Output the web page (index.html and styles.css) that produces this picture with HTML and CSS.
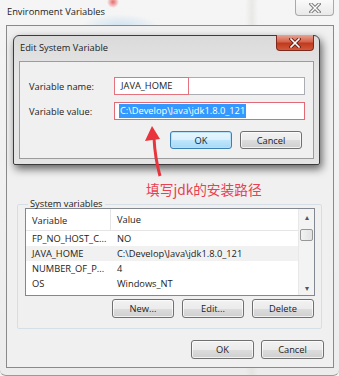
FILE: index.html
```html
<!DOCTYPE html>
<html lang="en">
<head>
    <meta charset="UTF-8">
    <meta name="viewport" content="width=device-width, initial-scale=1.0">
    <title>Environment Variables</title>
    <link rel="stylesheet" href="styles.css">
</head>
<body>
<div class="win">
    <div class="win-title">
        <span class="win-caption">Environment Variables</span>
        <span class="cap-btn">
            <svg width="12" height="10" viewBox="0 0 12 10">
                <path d="M2 1 L10 9 M10 1 L2 9" stroke="#7b7b7b" stroke-width="3.4" stroke-linecap="square"/>
                <path d="M2 1 L10 9 M10 1 L2 9" stroke="#fdfdfd" stroke-width="1.4" stroke-linecap="square"/>
            </svg>
        </span>
    </div>

    <div class="win-body">
        <fieldset class="group">
            <legend>System variables</legend>
            <div class="list">
                <div class="list-main">
                    <div class="list-head"><span>Variable</span><span>Value</span></div>
                    <div class="row"><span>FP_NO_HOST_C...</span><span>NO</span></div>
                    <div class="row row-sel"><span>JAVA_HOME</span><span>C:\Develop\Java\jdk1.8.0_121</span></div>
                    <div class="row"><span>NUMBER_OF_P...</span><span>4</span></div>
                    <div class="row"><span>OS</span><span>Windows_NT</span></div>
                </div>
                <div class="scroll">
                    <span class="scroll-arrow">&#9652;</span>
                    <span class="scroll-thumb"></span>
                    <span class="scroll-track"></span>
                    <span class="scroll-arrow">&#9662;</span>
                </div>
            </div>
            <div class="btn-row">
                <button class="btn">New...</button>
                <button class="btn">Edit...</button>
                <button class="btn">Delete</button>
            </div>
        </fieldset>

        <div class="win-footer">
            <button class="btn btn-wide">OK</button>
            <button class="btn btn-wide">Cancel</button>
        </div>
    </div>
</div>

<!-- the edit dialog sits over the main window -->
<div class="dlg">
    <div class="dlg-title">
        <span>Edit System Variable</span>
        <span class="cap-btn cap-close">
            <svg width="12" height="10" viewBox="0 0 12 10">
                <path d="M2 1 L10 9 M10 1 L2 9" stroke="#6b2015" stroke-width="3.4" stroke-linecap="square"/>
                <path d="M2 1 L10 9 M10 1 L2 9" stroke="#ffffff" stroke-width="1.6" stroke-linecap="square"/>
            </svg>
        </span>
    </div>
    <div class="dlg-client">
        <div class="field">
            <label>Variable name:</label>
            <div class="input"><span class="mark">JAVA_HOME</span></div>
        </div>
        <div class="field">
            <label>Variable value:</label>
            <div class="input input-marked"><span class="selected">C:\Develop\Java\jdk1.8.0_121</span></div>
        </div>
        <div class="dlg-buttons">
            <button class="btn btn-default">OK</button>
            <button class="btn">Cancel</button>
        </div>
    </div>
</div>

<svg class="arrow" width="30" height="58" viewBox="0 0 30 58">
    <path d="M14 16 Q15 36 20 54" stroke="#e8343c" stroke-width="3" fill="none"/>
    <path d="M12 4 L5 19 L20 17 Z" fill="#e8343c"/>
</svg>
<div class="note">填写jdk的安装路径</div>
</body>
</html>
```

FILE: styles.css
```css
body {
    margin: 0;
    width: 339px;
    height: 376px;
    overflow: hidden;
    position: relative;
    font-family: 'Open Sans', 'Noto Sans', sans-serif;
    font-size: 9.3px;
    color: #1b1b1b;
    background: #f2f2f2;
}

.win {
    box-sizing: border-box;
    width: 339px;
    height: 376px;
    padding: 0 5px 7px 6px;
    display: flex;
    flex-direction: column;
    background:
        radial-gradient(ellipse 40px 14px at 120px 28px, rgba(150, 200, 235, 0.45), transparent),
        radial-gradient(circle 6px at 113px 2px, rgba(230, 70, 70, 0.8), transparent),
        linear-gradient(90deg, transparent 245px, rgba(220, 220, 215, 0.5) 252px, transparent 258px),
        linear-gradient(#f5f5f5, #ececec);
    border-bottom: 1px solid #9a9a9a;
    border-radius: 0 0 6px 6px;
}

.win-title {
    height: 25px;
    display: flex;
    align-items: flex-start;
    flex-shrink: 0;
}

.win-caption {
    padding: 5px 0 0 1px;
    color: #222;
}

.cap-btn {
    margin-left: auto;
    width: 39px;
    height: 16px;
    box-sizing: border-box;
    display: flex;
    align-items: center;
    justify-content: center;
    background: linear-gradient(#fafafa, #e9e9e9);
    border: 1px solid #a9a9a9;
    border-top: none;
    border-radius: 0 0 4px 4px;
}

.win-body {
    flex: 1;
    display: flex;
    flex-direction: column;
    background: #f0f0f0;
    border: 1px solid #8a8a8a;
}

.group {
    margin: 174px 11px 0 10px;
    padding: 0 6px 10px 7px;
    border: 1px solid #d5dfe5;
    border-radius: 2px;
    min-width: 0;
}

.group legend {
    line-height: 8px;
    padding: 0 2px;
    margin-left: 3px;
}

.list {
    height: 88px;
    box-sizing: border-box;
    display: flex;
    background: #fff;
    border: 1px solid #828790;
}

.list-main {
    flex: 1;
}

.list-head,
.row {
    display: grid;
    grid-template-columns: 84px 1fr;
}

.list-head {
    height: 22px;
    align-items: center;
    border-bottom: 1px solid #e5e5e5;
    box-sizing: border-box;
}

.list-head span {
    padding-left: 6px;
}

.list-head span + span {
    border-left: 1px solid #e5e5e5;
    padding-left: 6px;
    height: 22px;
    line-height: 22px;
}

.row {
    height: 15px;
    line-height: 15px;
}

.row span {
    padding-left: 6px;
    white-space: nowrap;
}

.row span + span {
    padding-left: 7px;
}

.row-sel {
    background: #f1f1f1;
}

.scroll {
    width: 15px;
    display: flex;
    flex-direction: column;
    align-items: center;
    background: #f3f3f3;
    border-left: 1px solid #e8e8e8;
}

.scroll-arrow {
    height: 15px;
    line-height: 15px;
    font-size: 8px;
    color: #555;
}

.scroll-thumb {
    width: 13px;
    height: 12px;
    margin-top: 5px;
    box-sizing: border-box;
    border: 1px solid #979797;
    border-radius: 2px;
    background: linear-gradient(90deg, #f3f3f3, #e2e2e2);
}

.scroll-track {
    flex: 1;
}

.btn-row {
    display: flex;
    justify-content: flex-end;
    gap: 8px;
    margin-top: 3px;
    padding-right: 1px;
}

.btn {
    width: 62px;
    height: 19px;
    padding: 0;
    font: inherit;
    color: #1b1b1b;
    border: 1px solid #707070;
    border-radius: 3px;
    background: linear-gradient(#f2f2f2, #ebebeb 50%, #dddddd 51%, #cfcfcf);
    box-shadow: inset 0 0 0 1px rgba(255, 255, 255, 0.7);
}

.btn-wide {
    width: 63px;
}

.win-footer {
    display: flex;
    justify-content: flex-end;
    gap: 7px;
    margin-top: 11px;
    padding-right: 9px;
}

.dlg {
    position: absolute;
    left: 13px;
    top: 35px;
    width: 307px;
    height: 130px;
    box-sizing: border-box;
    display: flex;
    flex-direction: column;
    border: 1px solid #3c3c3c;
    border-radius: 6px 6px 2px 2px;
    background: linear-gradient(#dadada, #e6e6e6 30%, #e4e4e4);
    box-shadow: 2px 4px 8px rgba(0, 0, 0, 0.6);
}

.dlg-title {
    height: 25px;
    display: flex;
    align-items: flex-start;
    flex-shrink: 0;
}

.dlg-title > span:first-child {
    padding: 5px 0 0 6px;
}

.cap-close {
    width: 38px;
    margin-top: -1px;
    margin-right: 5px;
    border: 1px solid #7d2a1e;
    border-top: none;
    background: linear-gradient(#e9a393, #d4634b 45%, #c2381d 55%, #d05a3c);
}

.dlg-client {
    flex: 1;
    margin: 0 5px 5px 5px;
    padding: 15px 8px 0 9px;
    background: #f0f0f0;
    border: 1px solid #9c9c9c;
}

.field {
    display: flex;
    align-items: center;
    margin-bottom: 7px;
}

.field label {
    width: 85px;
}

.input {
    flex: 1;
    height: 18px;
    box-sizing: border-box;
    display: flex;
    align-items: center;
    background: #fff;
    border: 1px solid #abadb3;
}

.mark {
    box-sizing: border-box;
    width: 75px;
    height: 18px;
    margin: -1px 0 0 -1px;
    padding-left: 6px;
    line-height: 16px;
    border: 1px solid #e4737d;
}

.input-marked {
    border-color: #e06a75;
}

.selected {
    margin-left: 4px;
    padding: 0 1px;
    line-height: 14px;
    color: #fff;
    background: #3399ff;
}

.dlg-buttons {
    display: flex;
    justify-content: flex-end;
    gap: 8px;
    margin-top: 11px;
    padding-right: 3px;
}

.dlg-buttons .btn {
    height: 18px;
}

.btn-default {
    border-color: #3c7fb1;
    background: linear-gradient(#eaf6fd, #d9f0fc 50%, #bee6fd 51%, #a7d9f5);
    box-shadow: inset 0 0 0 1px #b8e0f8;
}

.arrow {
    position: absolute;
    left: 140px;
    top: 122px;
}

.note {
    position: absolute;
    left: 146px;
    top: 180px;
    font-family: 'Noto Sans CJK SC', sans-serif;
    font-size: 13.7px;
    line-height: 18px;
    color: #e9414f;
}
```
